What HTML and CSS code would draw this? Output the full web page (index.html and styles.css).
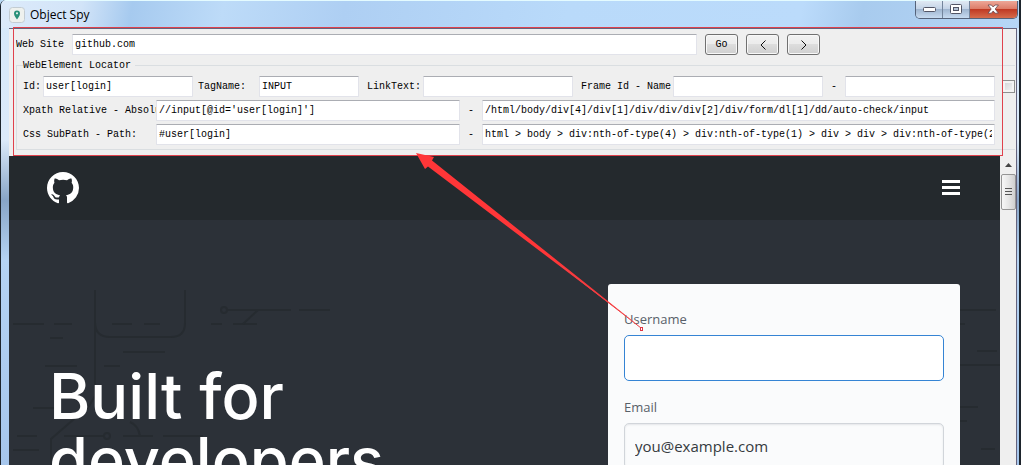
FILE: index.html
```html
<!DOCTYPE html>
<html lang="en">
<head>
<meta charset="utf-8">
<title>Object Spy</title>
<link rel="stylesheet" href="styles.css">
</head>
<body>
<div class="window">
  <header class="titlebar">
    <svg class="app-icon" viewBox="0 0 16 16" aria-hidden="true">
      <rect x=".5" y=".5" width="15" height="15" rx="3" fill="#eef1ee" stroke="#c3ccd2"/>
      <path d="M8 12.5C7 10.4 5 9 5 6.4a3 3 0 0 1 6 0C11 9 9 10.4 8 12.5z" fill="#299078"/>
      <circle cx="8" cy="6.3" r="1.1" fill="#e5f2ec"/>
    </svg>
    <h1 class="title">Object Spy</h1>
    <div class="controls">
      <button class="control" type="button" aria-label="Minimize"><svg width="13" height="6" viewBox="0 0 13 6"><rect x=".5" y=".5" width="12" height="4" rx="1" fill="#fff" stroke="#535666"/></svg></button>
      <button class="control" type="button" aria-label="Maximize"><svg width="13" height="11" viewBox="0 0 13 11"><rect x=".5" y=".5" width="11" height="9" rx="1" fill="#fff" stroke="#535666"/><rect x="3.5" y="3.5" width="5" height="3" fill="#b4c3d5" stroke="#535666"/></svg></button>
      <button class="control close" type="button" aria-label="Close"><svg width="13" height="11" viewBox="0 0 13 11"><path d="M1 1h3.400l1.800 2 1.800-2h3.400L8.200 5l3.200 4.200H8L6.200 7 4.400 9.200H1L4.200 5z" fill="#fff" stroke="#64464e" stroke-width=".8"/></svg></button>
    </div>
  </header>

  <div class="client">
    <form class="panel">
      <div class="site-row">
        <label for="site">Web Site</label>
        <input class="field site" id="site" type="text" value="github.com">
        <button class="nav" type="button">Go</button>
        <button class="nav" type="button" aria-label="Back"><svg width="8" height="10" viewBox="0 0 8 10"><path d="M6.500 .5 2 5l4.500 4.500" fill="none" stroke="#111"/></svg></button>
        <button class="nav" type="button" aria-label="Forward"><svg width="8" height="10" viewBox="0 0 8 10"><path d="M1.500 .5 6 5 1.500 9.500" fill="none" stroke="#111"/></svg></button>
      </div>
      <fieldset class="locator">
        <legend>WebElement Locator</legend>
        <div class="row row-attrs">
          <label for="id">Id:</label>
          <input class="field" id="id" type="text" value="user[login]">
          <label for="tag">TagName:</label>
          <input class="field" id="tag" type="text" value="INPUT">
          <label for="link">LinkText:</label>
          <input class="field" id="link" type="text">
          <label for="frame">Frame Id - Name</label>
          <input class="field" id="frame" type="text">
          <span class="dash">-</span>
          <input class="field" type="text" aria-label="Frame name">
          <input class="check" type="checkbox" aria-label="Use frame">
        </div>
        <div class="row row-path">
          <label for="xpath">Xpath Relative - Absolute:</label>
          <input class="field" id="xpath" type="text" value="//input[@id='user[login]']">
          <span class="dash">-</span>
          <input class="field" type="text" aria-label="Absolute Xpath" value="/html/body/div[4]/div[1]/div/div/div[2]/div/form/dl[1]/dd/auto-check/input">
        </div>
        <div class="row row-path">
          <label for="css">Css SubPath - Path:</label>
          <input class="field" id="css" type="text" value="#user[login]">
          <span class="dash">-</span>
          <input class="field" type="text" aria-label="Css path" value="html &gt; body &gt; div:nth-of-type(4) &gt; div:nth-of-type(1) &gt; div &gt; div &gt; div:nth-of-type(2) &gt; div">
        </div>
      </fieldset>
    </form>

    <div class="browser">
      <main class="site-page">
        <nav class="site-header">
          <a class="logo" href="#" aria-label="GitHub"><svg width="32" height="32" viewBox="0 0 16 16"><path fill="#fff" d="M8 0C3.580 0 0 3.580 0 8c0 3.540 2.290 6.530 5.470 7.590.4.070.55-.17.55-.38 0-.19-.01-.82-.01-1.490-2.010.37-2.530-.49-2.690-.94-.09-.23-.48-.94-.82-1.130-.28-.15-.68-.52-.01-.53.63-.01 1.080.58 1.230.82.72 1.210 1.870.87 2.330.66.07-.52.28-.87.51-1.070-1.780-.2-3.640-.89-3.640-3.950 0-.87.31-1.590.82-2.150-.08-.2-.36-1.020.08-2.120 0 0 .67-.21 2.200.82.64-.18 1.320-.27 2-.27s1.360.09 2 .27c1.530-1.040 2.200-.82 2.200-.82.44 1.100.16 1.920.08 2.120.51.56.82 1.270.82 2.150 0 3.070-1.870 3.750-3.650 3.950.29.25.54.73.54 1.480 0 1.070-.01 1.930-.01 2.200 0 .21.15.46.55.38A8.010 8.010 0 0 0 16 8c0-4.420-3.580-8-8-8z"/></svg></a>
          <button class="menu" type="button" aria-label="Menu"><svg width="18" height="16" viewBox="0 0 18 16"><path d="M0 0h18v3H0zM0 6h18v3H0zM0 12h18v3H0z" fill="#fff"/></svg></button>
        </nav>
        <section class="hero">
          <svg class="circuit" width="991" height="245" viewBox="0 0 991 245" aria-hidden="true">
            <g fill="none" stroke="#262b30" stroke-width="2">
              <path d="M86 70v106l-6 10-38 33v26M86 70v32q0 15 15 15h61q14 0 14-14V70"/>
              <path d="M4 104h31m10 0h18m40 0h20m12 0h16m51 0h11m11 0h24M41 118h13m60 14h42M36 146h32m27 0h16M24 188h28M8 216h20m27 0h41m18 0h30m10 0h40M4 230h26M121 202q8 3 10 14"/>
              <path d="M219 90h63m8 0h31m-72 0-15 14"/><circle cx="215" cy="90" r="3"/><circle cx="98" cy="216" r="3"/>
              <path d="M951 90h36m-36 14h5m12 27h20m-37 14h40m-40 42h18m-18 14h7m14 28h14"/>
            </g>
          </svg>
          <h2 class="headline">Built for developers</h2>
          <form class="signup">
            <label for="username">Username</label>
            <input class="entry focused" id="username" type="text">
            <label for="email">Email</label>
            <input class="entry" id="email" type="email" placeholder="you@example.com">
          </form>
        </section>
      </main>
      <div class="scrollbar">
        <svg width="7" height="4" viewBox="0 0 9 5"><path d="M4.500 0 9 5H0z" fill="#444"/></svg>
        <div class="thumb"><svg width="7" height="8" viewBox="0 0 7 8"><path d="M0 .5h7M0 3.500h7M0 6.500h7" stroke="#555"/></svg></div>
      </div>
    </div>
  </div>
</div>
<svg class="annotation" width="1021" height="465" viewBox="0 0 1021 465" aria-hidden="true">
  <rect x="13.500" y="27.500" width="989" height="128" fill="none" stroke="#e0414c"/>
  <path d="M416 153 434 157 432 160.500 641 327.500 428 166.500 425 169z" fill="#ff3638"/>
  <path d="M560 265 641 328" stroke="#ee4248" stroke-width="1"/>
  <rect x="640.500" y="327.500" width="2" height="3" fill="#fff" stroke="#df3544"/>
</svg>
</body>
</html>
```
FILE: styles.css
```css
* { box-sizing: border-box; }

body {
  position: relative;
  margin: 0;
  height: 100vh;
  overflow: hidden;
  background: linear-gradient(#b8d9f5 0, #c4d2e2 90px, #11141d 110px);
  font-family: "Liberation Mono", monospace;
  color: #000;
}

.window {
  display: flex;
  flex-direction: column;
  height: 100vh;
  padding: 0 2px 0 8px;
  overflow: hidden;
  border: solid #1d242c;
  border-width: 0 2px 0 1px;
  border-top-left-radius: 6px;
  background: linear-gradient(#d5e8fa, #dceafa 140px, #88a5c7 200px, #b5d3f3 260px, #a6c6ec);
}

.titlebar {
  display: flex;
  align-items: center;
  flex: none;
  height: 28px;
  margin: 0 -2px 0 -8px;
  padding-left: 8px;
  border-top: 1px solid #e4fbff;
  background: linear-gradient(100deg, #dceafa 0, #d2e4f8 80px, #a6caef 130px, #bddbf8 220px, #aecff3 340px, #b9dafa 560px, #bbdbfb 790px, #a8cbee 850px, #b6d6f6);
}

.app-icon { width: 16px; height: 16px; margin-right: 5px; }

.title {
  flex: 1;
  margin: 0;
  font: 400 12px/16px "Open Sans", "Noto Sans", sans-serif;
}

.controls {
  display: flex;
  align-self: flex-start;
  height: 18px;
  margin-right: 1px;
  overflow: hidden;
  border: 1px solid #55637a;
  border-top: 0;
  border-radius: 0 0 5px 5px;
}

.control {
  display: flex;
  align-items: center;
  justify-content: center;
  width: 27px;
  padding: 0;
  border: 0;
  border-right: 1px solid #73859c;
  background: linear-gradient(#e0e9f3 0, #c4d4e7 45%, #a0b6d0 50%, #c7dbf0);
}

.control.close {
  width: 47px;
  border-right: 0;
  background: linear-gradient(#eda798 0, #dd7d69 45%, #c03a24 50%, #d66c4c);
}

.client {
  display: flex;
  flex: 1;
  flex-direction: column;
  min-height: 0;
  border: 1px solid #65647e;
  border-width: 1px 1px 0 0;
}

.panel {
  flex: none;
  padding: 5px 0 6px 7px;
  background: #efefef;
  font-size: 10px;
  line-height: 14px;
}

.panel label { overflow: hidden; white-space: nowrap; }

.site-row {
  display: grid;
  grid-template-columns: 48px 1fr 33px 33px 33px;
  gap: 8px;
  align-items: center;
  height: 21px;
  padding-right: 19.6%;
}

.field {
  width: 100%;
  min-width: 0;
  height: 21px;
  padding: 0 2px;
  border: 1px solid #e2e3ea;
  border-top-color: #abadb3;
  border-radius: 1px;
  background: #fff;
  color: #000;
  font: 10px "Liberation Mono", monospace;
}

.nav {
  display: flex;
  align-items: center;
  justify-content: center;
  height: 21px;
  padding: 0;
  border: 1px solid #707070;
  border-radius: 3px;
  background: linear-gradient(#f2f2f2, #ebebeb 50%, #dddddd 50%, #cfcfcf);
  box-shadow: inset 0 0 0 1px #f8f8f8;
  font: 10px "Liberation Mono", monospace;
}

.locator {
  display: grid;
  gap: 4px;
  min-width: 0;
  margin: 4px 1px 0 0;
  padding: 4px 0 5px 6px;
  border: 1px solid #dadee1;
  border-right: 0;
}

.locator legend { padding: 0 4px 0 0; line-height: 13px; }

.row { display: grid; align-items: center; height: 20px; }

.row-attrs {
  grid-template-columns: 20px 150fr 66px 100fr 64px 150fr 100px 150fr 22px 150fr 20px;
}
.row-attrs label { padding-left: 5px; }
.row-attrs label:first-child { padding-left: 0; }
.row-attrs label[for="link"],
.row-attrs label[for="frame"] { padding-left: 8px; }

.row-path {
  grid-template-columns: 133px 304fr 22px 513fr;
  padding-right: 20px;
}

.dash { text-align: center; }

.check {
  appearance: none;
  justify-self: end;
  width: 13px;
  height: 13px;
  margin: 0;
  border: 1px solid #8e8f8f;
  background: linear-gradient(135deg, #cfd2d6, #f7f7f7);
  box-shadow: inset 0 0 0 2px #f4f4f4;
}

.browser { display: flex; flex: 1; min-height: 0; }

.site-page { flex: 1; min-width: 0; background: #2c3138; overflow: hidden; }

.site-header {
  display: flex;
  align-items: center;
  justify-content: space-between;
  height: 64px;
  padding: 0 40px 0 38px;
  background: #24292d;
}

.logo, .menu svg, .logo svg { display: block; }
.menu { padding: 0; border: 0; background: none; }

.hero {
  position: relative;
  display: flex;
  justify-content: space-between;
  align-items: flex-start;
  padding: 64px 40px 40px;
}

.circuit { position: absolute; top: 0; left: 0; }

.headline {
  position: relative;
  width: 400px;
  margin: 80px 0 0;
  color: #fff;
  font: 500 63px/64px Inter, sans-serif;
}

.signup {
  position: relative;
  display: flex;
  flex-direction: column;
  width: 352px;
  padding: 24px 16px;
  border-radius: 3px;
  background: #fafbfc;
  font-family: "Open Sans", "Noto Sans", sans-serif;
}

.signup label {
  margin-bottom: 4px;
  color: #586069;
  font-size: 13px;
  line-height: 23px;
}

.entry {
  height: 46px;
  margin-bottom: 15px;
  padding: 0 10px;
  border: 1px solid #d1d5da;
  border-radius: 5px;
  background: #fafbfc;
  box-shadow: inset 0 1px 2px #e4e6e9;
  font: 15px "Open Sans", "Noto Sans", sans-serif;
}

.entry::placeholder { color: #353a40; opacity: 1; }
.entry.focused { border-color: #3584d4; background: #fff; box-shadow: none; outline: 0; }

.scrollbar {
  display: flex;
  flex: none;
  flex-direction: column;
  align-items: center;
  gap: 7px;
  width: 16px;
  padding-top: 7px;
  background: #efefef;
}

.scrollbar > svg { flex: none; }

.thumb {
  display: flex;
  align-items: center;
  justify-content: center;
  width: 15px;
  height: 36px;
  border: 1px solid #959595;
  border-radius: 2px;
  background: linear-gradient(90deg, #f7f7f7, #e6e6e6 50%, #cfcfcf);
}

.annotation { position: absolute; top: 0; left: 0; pointer-events: none; }
```
